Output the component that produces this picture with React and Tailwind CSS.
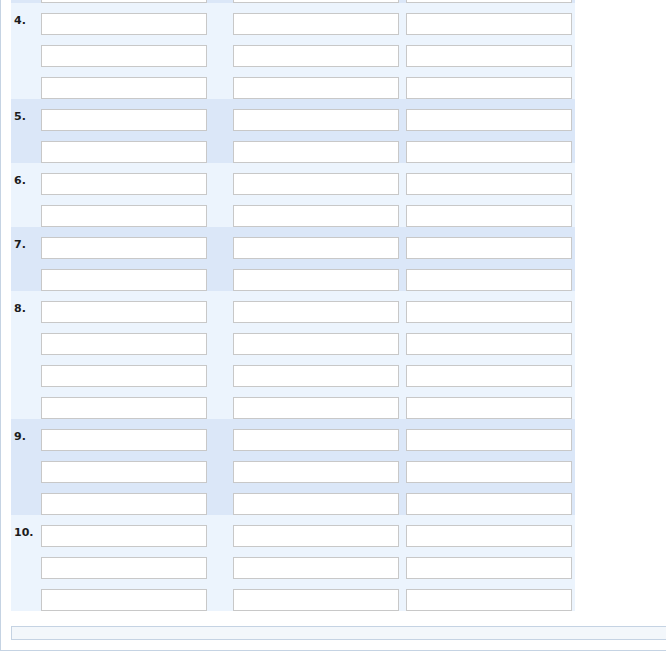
import React from 'react';

const groups = [
  { label: '3.', rows: 1, dark: true, partial: true },
  { label: '4.', rows: 3, dark: false },
  { label: '5.', rows: 2, dark: true },
  { label: '6.', rows: 2, dark: false },
  { label: '7.', rows: 2, dark: true },
  { label: '8.', rows: 4, dark: false },
  { label: '9.', rows: 3, dark: true },
  { label: '10.', rows: 3, dark: false },
];

function Field() {
  return (
    <input
      type="text"
      className="h-[22px] w-[166px] border border-[#c8c8c8] bg-white outline-none"
    />
  );
}

function Group({ group }) {
  const rows = Array.from({ length: group.rows });
  return (
    <div
      className={
        (group.dark ? 'bg-[#dbe7f8]' : 'bg-[#ecf4fd]') +
        (group.partial ? ' -mt-[29px]' : '')
      }
    >
      {rows.map((_, i) => (
        <div key={i} className="flex h-[32px] items-start pt-[10px]">
          <div className="mt-[1px] w-[30px] pl-[3px] text-[11px] leading-[13px] font-bold text-[#1c1c1c]">
            {i === 0 && !group.partial ? group.label : ''}
          </div>
          <Field />
          <div className="w-[26px]" />
          <Field />
          <div className="w-[7px]" />
          <Field />
        </div>
      ))}
    </div>
  );
}

export default function App() {
  return (
    <div className="h-[652px] w-[666px] overflow-hidden bg-white font-['DejaVu_Sans',Verdana,sans-serif]">
      <div className="w-[760px] border-b border-l border-[#c5d3e3] pb-[10px] pl-[10px]">
        <div className="w-[564px]">
          {groups.map((g) => (
            <Group key={g.label} group={g} />
          ))}
        </div>
        <div className="mt-[15px] h-[14px] border border-[#c5d3e3] bg-[#f3f7fb]" />
      </div>
    </div>
  );
}
